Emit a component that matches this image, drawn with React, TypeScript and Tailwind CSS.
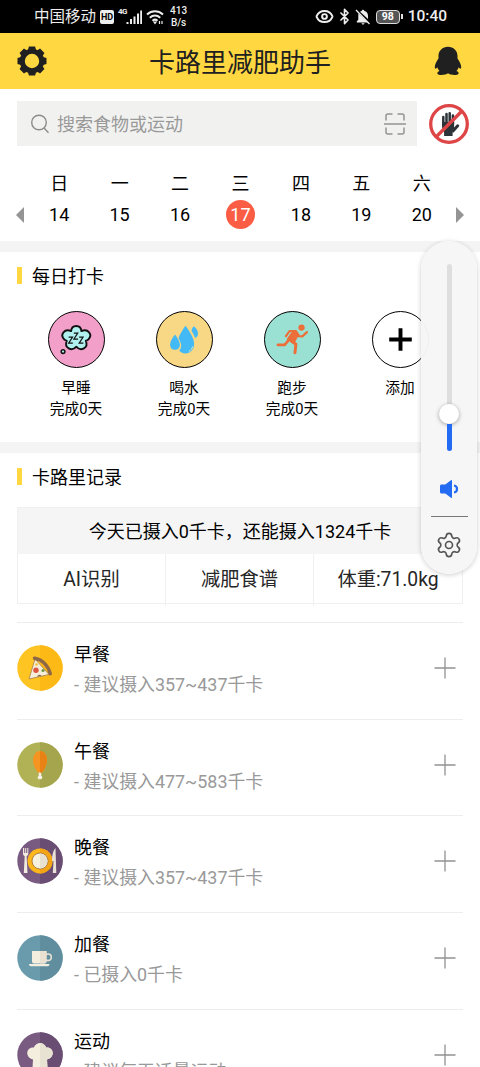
import { Bluetooth, Eye, Settings } from "lucide-react";

const days = [
  { name: "日", date: 14 },
  { name: "一", date: 15 },
  { name: "二", date: 16 },
  { name: "三", date: 17, active: true },
  { name: "四", date: 18 },
  { name: "五", date: 19 },
  { name: "六", date: 20 },
];

const habits = [
  { name: "早睡", status: "完成0天", bg: "bg-[#f2a0c9]", icon: <SleepIcon /> },
  { name: "喝水", status: "完成0天", bg: "bg-[#f9d885]", icon: <WaterIcon /> },
  { name: "跑步", status: "完成0天", bg: "bg-[#9ae1d4]", icon: <RunIcon /> },
  { name: "添加", status: "", bg: "bg-white", icon: <AddIcon /> },
];

const meals = [
  { name: "早餐", hint: "- 建议摄入357~437千卡", icon: <PizzaIcon /> },
  { name: "午餐", hint: "- 建议摄入477~583千卡", icon: <DrumstickIcon /> },
  { name: "晚餐", hint: "- 建议摄入357~437千卡", icon: <DinnerIcon /> },
  { name: "加餐", hint: "- 已摄入0千卡", icon: <CupIcon /> },
  { name: "运动", hint: "- 建议每天适量运动", icon: <ChefIcon /> },
];

function SleepIcon() {
  return (
    <svg viewBox="0 0 56 56" className="w-full h-full">
      <path
        d="M22.500 19.500c.5-7 10-7 10.500 0 6.500-3 12 3.500 7 8.500-2 1.500-2.500 1.300-2.500 1.300 3 7-5 11.500-9.700 6-4.700 5.500-12.700 1-9.700-6 0 0-.5.200-2.500-1.300-5-5 .4-11.500 6.900-8.500z"
        fill="#b0f0ef"
        stroke="#111"
        strokeWidth="1.900"
        strokeLinejoin="round"
      />
      <circle cx="14.300" cy="40.300" r="1.900" fill="#b0f0ef" stroke="#111" strokeWidth="1.500" />
      <path d="M20 25.500h4l-4 6.200h4.300M25.300 21.500h4l-4 6.200h4.300M30.700 25.500h4l-4 6.200H35" fill="none" stroke="#111" strokeWidth="1.200" />
    </svg>
  );
}

function WaterIcon() {
  return (
    <svg viewBox="0 0 56 56" className="w-full h-full" fill="#43b9f6">
      <path d="M37.500 14.500c2.500 2 4.200 4.300 4.200 7.300 0 2.700-1.200 4-3 4.500-.8-2.600-2-5-3.600-7.300.3-1.700 1.100-3.200 2.400-4.500z" />
      <path d="M29 14c4.500 6.200 8.800 12.500 8.800 18.700 0 5.500-3.900 9.500-8.800 9.500-2.500 0-4.800-1-6.400-2.700 2.200-2.400 2.600-5.500 1.300-8.700l-2-4.300c1.700-4.500 4.300-8.700 7.100-12.500z" />
      <path d="M18.300 22.800c2.500 3.500 5 7 5 10.500 0 3.200-2.100 5.200-5 5.200s-5-2.100-5-5.200c0-3.500 2.500-7.200 5-10.500z" />
      <path d="M36.300 35c-.7 2.500-1.800 4-3.800 5" fill="none" stroke="#d9edc7" />
    </svg>
  );
}

function RunIcon() {
  return (
    <svg viewBox="0 0 56 56" className="w-full h-full" fill="none" stroke="#ec6e38" strokeWidth="2.800" strokeLinecap="round" strokeLinejoin="round">
      <circle cx="37.200" cy="15.800" r="3.200" fill="#ec6e38" stroke="none" />
      <path d="M21.300 24.500l3.700-5h6.500l3 5 3.500.3 4.700-4.300" strokeWidth="2.300" />
      <path d="M28.500 20l-5.500 7.500 6 4.500 5.200-9.500z" fill="#ec6e38" strokeWidth="1.500" />
      <path d="M25 27.500l-5 6h-6.800" />
      <path d="M26.500 29l5 3.800-1 8.700" strokeWidth="3" />
    </svg>
  );
}

function AddIcon() {
  return (
    <svg viewBox="0 0 56 56" className="w-full h-full">
      <path d="M28 16.500v23M16.500 28h23" stroke="#000" strokeWidth="4" />
    </svg>
  );
}

function PizzaIcon() {
  return (
    <svg viewBox="0 0 46 46" className="w-[46px] h-[46px]">
      <circle cx="23" cy="23" r="22.700" fill="#fec422" />
      <path d="M23 .3a22.700 22.700 0 0 1 0 45.400z" fill="#fdb916" />
      <path d="M18 14l-6 20 20-4.500z" fill="#f4eedb" stroke="#a97c4d" strokeWidth=".8" strokeLinejoin="round" />
      <path d="M17.500 13.300c7.500 1.200 13.500 7 15.800 15.500" fill="none" stroke="#8d6748" strokeWidth="3.400" strokeLinecap="round" />
      <circle cx="19" cy="25.300" r="2.700" fill="#dc5540" />
      <circle cx="26" cy="25.500" r="1.500" fill="#6c9741" />
      <circle cx="19.500" cy="19.500" r="1.300" fill="#f4bd35" />
      <path d="M20 31.800c.5-2.300 3.500-2.800 4.500-1z" fill="#85644a" />
    </svg>
  );
}

function DrumstickIcon() {
  return (
    <svg viewBox="0 0 46 46" className="w-[46px] h-[46px]">
      <circle cx="23" cy="23" r="22.700" fill="#b1b256" />
      <path d="M23 .3a22.700 22.700 0 0 1 0 45.400z" fill="#a4a54c" />
      <path d="M21.800 29h2.400v4.500c1.500 1.200 1.500 3.700-.2 3.700h-2c-1.700 0-1.700-2.500-.2-3.700z" fill="#f4efe2" />
      <path d="M23 9c-4.300 0-7 4-7 9 0 5.500 2.700 9.300 5 12.500h4c2.300-3.200 5-7 5-12.500 0-5-2.700-9-7-9z" fill="#f59420" />
      <path d="M23 9c4.300 0 7 4 7 9 0 5.500-2.700 9.300-5 12.500h-2z" fill="#e98214" />
    </svg>
  );
}

function DinnerIcon() {
  return (
    <svg viewBox="0 0 46 46" className="w-[46px] h-[46px]">
      <circle cx="23" cy="23" r="22.700" fill="#795a80" />
      <path d="M23 .3a22.700 22.700 0 0 1 0 45.400z" fill="#694d73" />
      <circle cx="23" cy="23" r="12.500" fill="#fdb71a" />
      <path d="M23 10.500a12.500 12.500 0 0 1 0 25z" fill="#f2a414" />
      <circle cx="23" cy="23" r="8" fill="#f6f0df" stroke="#9c6a2b" strokeWidth=".8" />
      <path d="M23 15.400a7.600 7.600 0 0 1 0 15.200z" fill="#e8e1cf" />
      <path d="M6 10v5.500c0 1.500.8 2.300 1.700 2.700L6.800 35h3.700l-.9-16.800c.9-.4 1.700-1.200 1.700-2.700V10h-1v5H9.200v-5h-1v5h-1v-5z" fill="#f2ebe0" />
      <path d="M38.500 10c-2.500 2.500-3.500 7-3.500 13h1.500l-.7 12h3.500z" fill="#e9e2d7" />
    </svg>
  );
}

function CupIcon() {
  return (
    <svg viewBox="0 0 46 46" className="w-[46px] h-[46px]">
      <circle cx="23" cy="23" r="22.700" fill="#6a9bad" />
      <path d="M23 .3a22.700 22.700 0 0 1 0 45.400z" fill="#608e9f" />
      <circle cx="31" cy="22.300" r="3.300" fill="none" stroke="#e9e2d4" strokeWidth="1.600" />
      <path d="M15 16h14.500v10.500a2 2 0 0 1-2 2H17a2 2 0 0 1-2-2zM12 29h20.500c0 1.500-.8 2.200-2 2.200H14c-1.300 0-2-.7-2-2.200z" fill="#f4eedf" />
      <path d="M23 16h6.500v10.500a2 2 0 0 1-2 2H23z" fill="#e9e2d2" />
    </svg>
  );
}

function ChefIcon() {
  return (
    <svg viewBox="0 0 46 46" className="w-[46px] h-[46px]">
      <circle cx="23" cy="23" r="22.700" fill="#795a80" />
      <path d="M23 .3a22.700 22.700 0 0 1 0 45.400z" fill="#694d73" />
      <path d="M15.500 36l.5-8.500c-8-1.500-7.500-12.500.8-12 2.400-6 10-6 12.400 0 8.300-.5 8.800 10.500.8 12l.5 8.500z" fill="#f4eedf" />
      <path d="M23 11c2.500 0 5 1.500 6.200 4.500 8.300-.5 8.800 10.500.8 12l.5 8.500H23z" fill="#e8e2d3" />
    </svg>
  );
}

function GearIcon() {
  return (
    <svg viewBox="0 0 30 30" className="w-[30px] h-[30px]">
      <circle cx="15" cy="15" r="9.700" fill="none" stroke="#202020" strokeWidth="5" />
      {[0, 45, 90, 135, 180, 225, 270, 315].map((angle) => (
        <path key={angle} d="M11 4l.9-3.500h6.200L19 4z" fill="#202020" transform={`rotate(${angle} 15 15)`} />
      ))}
    </svg>
  );
}

function PenguinIcon() {
  return (
    <svg viewBox="0 0 28 30" className="w-7 h-[30px]" fill="#202020">
      <path d="M14 .7C8.500.7 4.500 4.700 4.500 9.800v2.700C2.700 15 .8 18.500.8 21c0 2 .9 2.500 2.500.3.400 1.500 1.200 2.600 2.200 3.600-3.500 1.500-2.700 4 1.700 4 3 0 5.500-.6 6.800-1.600 1.300 1 3.800 1.600 6.800 1.600 4.400 0 5.200-2.500 1.700-4 1-1 1.800-2.100 2.200-3.600 1.600 2.200 2.500 1.700 2.500-.3 0-2.500-1.900-6-3.700-8.500V9.800C23.500 4.700 19.500.7 14 .7z" />
    </svg>
  );
}

function NoTouchIcon() {
  return (
    <svg viewBox="0 0 40 40" className="w-10 h-10">
      <g fill="none" stroke="#2c3339" strokeLinecap="round" strokeWidth="2.500">
        <path d="M14.300 21v-8M17.500 19v-9M20.700 19V9.300M23.900 20v-8.500" />
        <path d="M24 27l4.700-5.200" strokeWidth="3" />
      </g>
      <path d="M13.100 18h12v5l1 2-2.500 3v4h-8.500v-3.500l-2-5z" fill="#2c3339" />
      <circle cx="20" cy="20" r="18.300" fill="none" stroke="#de4546" strokeWidth="3.300" />
      <path d="M7 33L33 7" stroke="#de4546" strokeWidth="3.300" />
    </svg>
  );
}

function StatusBar() {
  return (
    <div className="h-[33px] bg-black text-[#eee] flex items-center pl-[34px] pr-[33px]">
      <span className="mt-[2px] text-[15.500px] leading-none">中国移动</span>
      <span className="ml-[4px] w-[14px] h-[14px] rounded-[2px] bg-[#eee] text-black text-[9px] font-bold leading-[14px] text-center">HD</span>
      <span className="ml-[4px] mb-[9px] text-[8px] font-bold leading-none tracking-[-0.5px]">4G</span>
      <svg viewBox="0 0 16 16" className="-ml-px w-4 h-4" stroke="#eee" strokeWidth="2">
        <path d="M1.500 15v-2M5 15v-5M8.500 15V7.500M12 15V4.500M15.200 15V1.500" />
      </svg>
      <svg viewBox="0 0 18 16" className="ml-[4px] w-[18px] h-4" fill="none" stroke="#eee" strokeWidth="2">
        <path d="M1 5.500c4.700-4.300 11.300-4.300 16 0M3.800 8.700c3.100-2.800 7.300-2.800 10.400 0M6.500 11.700c1.500-1.300 3.500-1.300 5 0" />
        <path d="M8 13h2l-1 1.500zM13.500 12v3M16 12v3" strokeWidth="1.200" />
      </svg>
      <span className="ml-[5px] w-[19px] text-center text-[10px] font-medium leading-[12px]">413<br />B/s</span>
      <div className="ml-auto flex items-center">
        <Eye className="w-[19px] h-[19px]" strokeWidth={2.500} />
        <Bluetooth className="ml-[2px] w-[17px] h-[17px]" strokeWidth={2.300} />
        <svg viewBox="0 0 16 16" className="ml-[2px] w-4 h-4" fill="#eee">
          <path d="M3.500 4.500l9.500 9H1.800v-1.200l1.500-1.500V7c0-.9 0-1.700.2-2.500zM5 2.700l1.900-.9c0-1.400 2.200-1.400 2.200 0 2.500.6 3.900 2.700 3.900 5v3.300zM6.500 14.300h3c-.3 1.600-2.700 1.600-3 0z" />
          <path d="M1 1l13.500 14" stroke="#eee" strokeWidth="1.300" />
        </svg>
        <span className="ml-[5px] w-[24px] h-[14px] border-[1.500px] border-[#ddd] rounded-[4px] bg-[#555] text-white text-[10.500px] font-bold leading-[12px] text-center">98</span>
        <span className="ml-px w-[2px] h-[5px] bg-[#ddd]" />
        <span className="ml-[5px] text-[15.500px] leading-none font-medium">10:40</span>
      </div>
    </div>
  );
}

function SectionTitle({ title }: { title: string }) {
  return (
    <div className="flex items-start">
      <span className="w-[5px] h-[17px] bg-[#ffd740] mt-[3px] mr-[10px]" />
      <h2 className="text-[18px] leading-[26px]">{title}</h2>
    </div>
  );
}

function VolumePanel() {
  return (
    <div className="absolute left-[421px] top-[241px] w-[56px] h-[333px] rounded-[28px] bg-[#f6f6f6]/97 shadow-[0_1px_5px_rgba(0,0,0,0.2)] flex flex-col items-center pt-[23px]">
      <div className="w-[5px] h-[140px] rounded-t-full bg-[#dedede]" />
      <div className="w-5 h-5 rounded-full bg-white shadow-[0_1px_4px_rgba(0,0,0,0.35)]" />
      <div className="w-[5px] h-[27px] rounded-b-full bg-[#246bf4]" />
      <svg viewBox="0 0 20 20" className="mt-[28px] w-5 h-5" fill="#246bf4">
        <path d="M2.500 5.500h3.800L12 1.300c.5-.4 1-.1 1 .5v16.400c0 .6-.5.900-1 .5l-5.700-4.200H2.500c-.8 0-1.500-.6-1.500-1.500V7c0-.9.7-1.500 1.500-1.500z" />
        <path d="M15 6.500c4 .5 4 6.500 0 7" fill="none" stroke="#246bf4" strokeWidth="2.200" />
      </svg>
      <div className="mt-[17px] w-[37px] h-px bg-[#777]" />
      <Settings className="mt-[14px] w-7 h-7 text-[#555]" strokeWidth={1.400} />
    </div>
  );
}

export default function App() {
  return (
    <div className="relative w-[480px] h-[1067px] overflow-hidden bg-white text-black font-[Roboto,'Noto_Sans_CJK_SC',sans-serif]">
      <StatusBar />

      {/* Header */}
      <header className="h-[56px] bg-[#ffd740] flex items-center justify-between pl-[17px] pr-[18px]">
        <GearIcon />
        <h1 className="mt-[4px] -ml-px text-[26px] leading-none text-[#202020]">卡路里减肥助手</h1>
        <PenguinIcon />
      </header>

      {/* Search */}
      <div className="flex items-center pt-[12px] pl-[17px]">
        <div className="w-[400px] h-[45px] bg-[#f1f1f0] flex items-center pl-[13px] pr-[10px] text-[#999]">
          <svg viewBox="0 0 20 20" className="w-5 h-5" fill="none" stroke="#8c8c8c" strokeWidth="1.400">
            <circle cx="9" cy="8.500" r="7.300" />
            <path d="M14 14l4.500 4.800" />
          </svg>
          <span className="ml-[7px] mt-[2px] text-[18px] leading-none">搜索食物或运动</span>
          <svg viewBox="0 0 24 24" className="ml-auto w-6 h-6" fill="none" stroke="#949494" strokeWidth="1.500">
            <path d="M3 8.500V4a2 2 0 0 1 2-2h4.500M14.500 2H19a2 2 0 0 1 2 2v4.500M21 15.500V20a2 2 0 0 1-2 2h-4.500M9.500 22H5a2 2 0 0 1-2-2v-4.500M1 12h22" />
          </svg>
        </div>
        <div className="ml-[12px]">
          <NoTouchIcon />
        </div>
      </div>

      {/* Week */}
      <div className="h-[95px] flex pt-[26px] pl-[16px]">
        <svg viewBox="0 0 8 16" className="mt-[35px] w-2 h-4" fill="#949494"><path d="M8 0v16L0 8z" /></svg>
        <div className="ml-[5px] w-[423px] grid grid-cols-7 text-center text-[18px]">
          {days.map((day) => (
            <div key={day.date} className="flex flex-col items-center">
              <span className="leading-6">{day.name}</span>
              <span className={`mt-[4px] w-[29px] h-[29px] rounded-full leading-[30px] ${day.active ? "bg-[#fb5c44] text-white" : ""}`}>{day.date}</span>
            </div>
          ))}
        </div>
        <svg viewBox="0 0 8 16" className="ml-[4px] mt-[35px] w-2 h-4" fill="#949494"><path d="M0 0v16l8-8z" /></svg>
      </div>

      {/* Daily check-in */}
      <section className="h-[201px] border-t-[11px] border-[#f4f4f4] pt-[12px] pl-[17px]">
        <SectionTitle title="每日打卡" />
        <div className="mt-[21px] ml-[5px] w-[432px] grid grid-cols-4">
          {habits.map((habit) => (
            <div key={habit.name} className="flex flex-col items-center text-[14.700px] leading-[21px]">
              <div className={`w-[57px] h-[57px] rounded-full border border-black ${habit.bg}`}>{habit.icon}</div>
              <span className="mt-[10px]">{habit.name}</span>
              <span>{habit.status}</span>
            </div>
          ))}
        </div>
      </section>

      {/* Calorie record */}
      <section className="border-t-[11px] border-[#f4f4f4] pt-[12px] px-[17px]">
        <SectionTitle title="卡路里记录" />
        <div className="mt-[16px] w-[446px] h-[97px] border border-[#f0f0f0]">
          <div className="h-[46px] bg-[#f5f5f5] text-center text-[18px] leading-[48px]">今天已摄入0千卡，还能摄入1324千卡</div>
          <div className="h-[49px] grid grid-cols-3 divide-x divide-[#f0f0f0] text-center text-[19.300px] leading-[52px] text-[#262626]">
            <span>AI识别</span>
            <span>减肥食谱</span>
            <span>体重:71.0kg</span>
          </div>
        </div>

        <ul className="mt-[18px] w-[446px]">
          {meals.map((meal) => (
            <li key={meal.name} className="h-[96.700px] border-t border-[#ededed] flex pt-[22px]">
              {meal.icon}
              <div className="ml-[11px] -mt-[2px] text-[18px]">
                <h3 className="leading-[24px]">{meal.name}</h3>
                <p className="mt-[5px] leading-[25px] text-[#999] text-[17.900px]">{meal.hint}</p>
              </div>
              <svg viewBox="0 0 22 22" className="ml-auto mr-[7px] mt-[12px] w-[22px] h-[22px]">
                <path d="M11 .5v21M.5 11h21" stroke="#929292" strokeWidth="1.300" />
              </svg>
            </li>
          ))}
        </ul>
      </section>

      <VolumePanel />
    </div>
  );
}
